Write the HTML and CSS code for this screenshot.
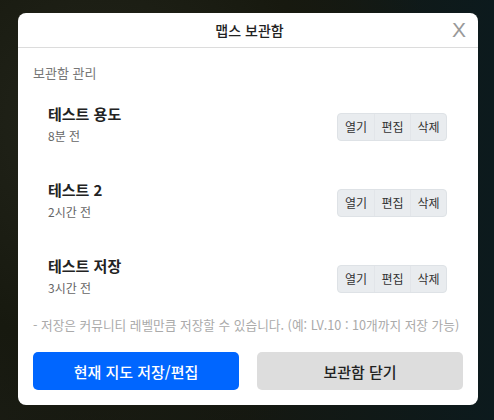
FILE: index.html
```html
<!DOCTYPE html>
<html lang="ko">
<head>
<meta charset="utf-8">
<link rel="stylesheet" href="styles.css">
</head>
<body>
<div class="backdrop">
  <div class="modal">
    <div class="modal-header">
      <span></span>
      <h1 class="modal-title">맵스 보관함</h1>
      <button class="close">X</button>
    </div>
    <div class="modal-body">
      <div class="section-label">보관함 관리</div>
      <ul class="list">
        <li class="item">
          <div class="info">
            <div class="name">테스트 용도</div>
            <div class="time">8분 전</div>
          </div>
          <div class="btn-group">
            <button class="btn">열기</button><button class="btn">편집</button><button class="btn">삭제</button>
          </div>
        </li>
        <li class="item">
          <div class="info">
            <div class="name">테스트 2</div>
            <div class="time">2시간 전</div>
          </div>
          <div class="btn-group">
            <button class="btn">열기</button><button class="btn">편집</button><button class="btn">삭제</button>
          </div>
        </li>
        <li class="item">
          <div class="info">
            <div class="name">테스트 저장</div>
            <div class="time">3시간 전</div>
          </div>
          <div class="btn-group">
            <button class="btn">열기</button><button class="btn">편집</button><button class="btn">삭제</button>
          </div>
        </li>
      </ul>
      <p class="note">- 저장은 커뮤니티 레벨만큼 저장할 수 있습니다. (예: LV.10 : 10개까지 저장 가능)</p>
      <div class="actions">
        <button class="action primary">현재 지도 저장/편집</button>
        <button class="action secondary">보관함 닫기</button>
      </div>
    </div>
  </div>
</div>
</body>
</html>
```
FILE: styles.css
```css
* { box-sizing: border-box; }
html, body { margin: 0; height: 100%; }
body {
  font-family: "Noto Sans CJK KR", "Noto Sans", sans-serif;
  background: radial-gradient(circle at 20% 30%, #23251b 0%, #17190f 45%, transparent 70%),
              linear-gradient(90deg, #1a1c14 0%, #151811 50%, #0c1a1d 100%);
  overflow: hidden;
}
.backdrop {
  padding: 13px 16px 0 18px;
}
.modal {
  width: 460px;
  height: 392px;
  background: #fff;
  border-radius: 8px;
  display: flex;
  flex-direction: column;
}
.modal-header {
  height: 35px;
  border-bottom: 1px solid #dcdcdc;
  display: grid;
  grid-template-columns: 1fr auto 1fr;
  align-items: center;
  padding: 0 12px 0 15px;
}
.modal-title {
  margin: 0;
  font-size: 14px;
  font-weight: 500;
  color: #222;
  line-height: 20px;
}
.close {
  justify-self: end;
  border: 0;
  background: none;
  padding: 0;
  font-family: "Liberation Sans", sans-serif;
  font-size: 21px;
  color: #999;
  line-height: 22px;
  cursor: pointer;
}
.modal-body {
  padding: 16px 15px 15px;
  display: flex;
  flex-direction: column;
  flex: 1;
}
.section-label {
  font-size: 13px;
  color: #777;
  line-height: 18px;
}
.list {
  list-style: none;
  margin: 7px 0 0;
  padding: 0;
}
.item {
  height: 76px;
  display: flex;
  align-items: center;
  justify-content: space-between;
  padding: 0 16px 0 15px;
}
.info {
  display: flex;
  flex-direction: column;
  gap: 4px;
  margin-bottom: 6px;
}
.name {
  font-size: 15px;
  font-weight: 700;
  color: #222;
  line-height: 20px;
}
.time {
  font-size: 12px;
  color: #666;
  line-height: 16px;
}
.btn-group {
  display: flex;
  background: #e9ecef;
  border: 1px solid #dee2e6;
  border-radius: 4px;
  height: 28px;
  overflow: hidden;
}
.btn {
  border: 0;
  border-left: 1px solid #e2e5e9;
  background: transparent;
  font-family: inherit;
  font-size: 12px;
  color: #333;
  width: 36px;
  padding: 0;
  line-height: 26px;
}
.btn:first-child { border-left: 0; }
.note {
  margin: 0;
  font-size: 12.7px;
  color: #aaa;
  line-height: 16px;
  white-space: nowrap;
}
.actions {
  margin-top: auto;
  display: flex;
  gap: 18px;
}
.action {
  flex: 1;
  height: 38px;
  border: 0;
  border-radius: 5px;
  font-family: inherit;
  font-size: 15px;
  font-weight: 500;
}
.primary { background: #0066ff; color: #fff; }
.secondary { background: #dddddd; color: #222; }
```
